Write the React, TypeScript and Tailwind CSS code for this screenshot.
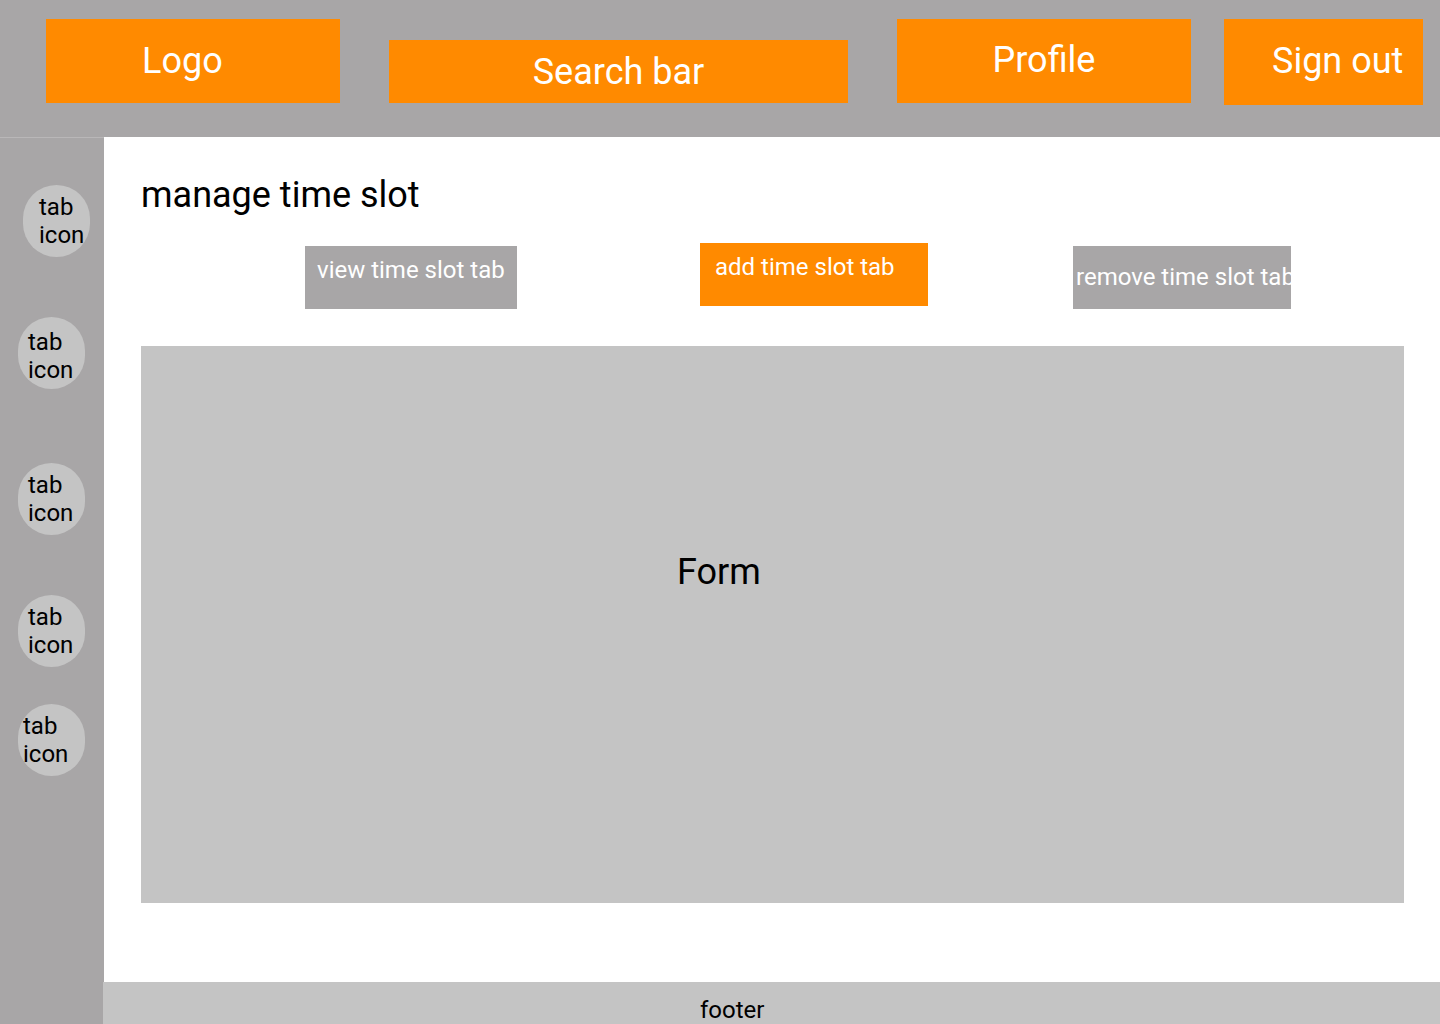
import React from "react";

const font = { fontFamily: "Roboto, 'Liberation Sans', sans-serif" };

function TabIcon({ mt, pl, pt }: { mt: string; pl: string; pt: string }) {
  return (
    <div className={`${mt} ml-[18px] w-[67px] h-[72px] rounded-full bg-[#c4c4c4] text-black text-[24px] leading-[28px] ${pl} ${pt}`}>
      tab
      <br />
      icon
    </div>
  );
}

export default function App() {
  return (
    <div className="w-[1440px] h-[1024px] flex flex-col bg-white overflow-hidden" style={font}>
      {/* Header */}
      <header className="h-[137px] shrink-0 bg-[#a8a6a7] flex items-start pl-[46px]">
        <div className="mt-[19px] w-[294px] h-[84px] bg-[#ff8a00] text-white text-[36px] leading-[42px] flex items-center pl-[96px]">
          Logo
        </div>
        <div className="mt-[40px] ml-[49px] w-[459px] h-[63px] bg-[#ff8a00] text-white text-[36px] leading-[42px] flex items-center justify-center pt-[1px]">
          Search bar
        </div>
        <div className="mt-[19px] ml-[49px] w-[294px] h-[84px] bg-[#ff8a00] text-white text-[36px] leading-[42px] flex items-center justify-center pb-[3px]">
          Profile
        </div>
        <div className="mt-[19px] ml-[33px] w-[199px] h-[86px] bg-[#ff8a00] text-white text-[36px] leading-[42px] flex items-center pl-[48px] pb-[2px]">
          Sign out
        </div>
      </header>

      <div className="flex flex-1 min-h-0">
        {/* Sidebar */}
        <aside className="w-[104px] shrink-0 bg-[#a8a6a7] flex flex-col border-t border-[#b9b7b8]">
          <div className="mt-[47px] ml-[23px] w-[67px] h-[72px] rounded-full bg-[#c4c4c4] text-black text-[24px] leading-[28px] pl-[16px] pt-[8px]">
            tab
            <br />
            icon
          </div>
          <TabIcon mt="mt-[60px]" pl="pl-[10px]" pt="pt-[11px]" />
          <TabIcon mt="mt-[74px]" pl="pl-[10px]" pt="pt-[8px]" />
          <TabIcon mt="mt-[60px]" pl="pl-[10px]" pt="pt-[8px]" />
          <TabIcon mt="mt-[37px]" pl="pl-[5px]" pt="pt-[8px]" />
        </aside>

        {/* Main column */}
        <div className="flex-1 flex flex-col min-w-0 -ml-[1px]">
          <main className="flex-1 flex flex-col pl-[38px] pr-[36px]">
            <h1 className="mt-[37px] h-[42px] text-[36px] leading-[42px] text-black font-normal">
              manage time slot
            </h1>
            <div className="mt-[27px] flex items-start">
              <div className="ml-[164px] mt-[3px] w-[212px] h-[63px] bg-[#a8a6a7] text-white text-[24px] leading-[28px] pl-[12px] pt-[10px] whitespace-nowrap overflow-hidden">
                view time slot tab
              </div>
              <div className="ml-[183px] w-[228px] h-[63px] bg-[#ff8a00] text-white text-[24px] leading-[28px] pl-[15px] pt-[10px] whitespace-nowrap overflow-hidden">
                add time slot tab
              </div>
              <div className="ml-[145px] mt-[3px] w-[218px] h-[63px] bg-[#a8a6a7] text-white text-[24px] leading-[28px] pl-[3px] pt-[17px] whitespace-nowrap overflow-hidden">
                remove time slot tab
              </div>
            </div>
            <div className="mt-[37px] h-[557px] bg-[#c4c4c4] text-black text-[36px] leading-[42px] pl-[536px] pt-[205px]">
              Form
            </div>
          </main>
          <footer className="h-[42px] shrink-0 bg-[#c4c4c4] text-black text-[24px] leading-[28px] pl-[597px] pt-[14px] overflow-hidden">
            footer
          </footer>
        </div>
      </div>
    </div>
  );
}
